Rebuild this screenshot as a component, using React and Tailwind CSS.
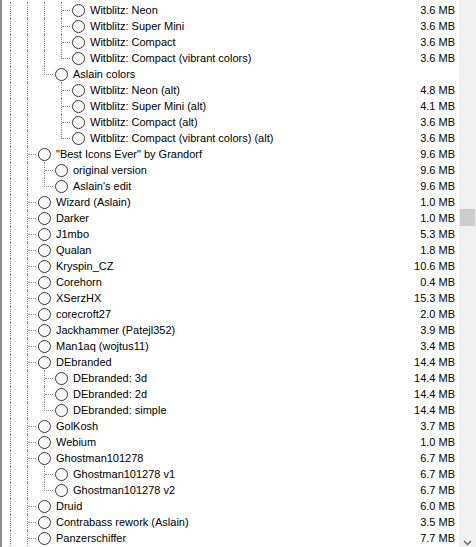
import React from 'react'

// tree cells: I = line passes through, T = tee, L = last child corner, ' ' = empty
const rows = [
  { cells: 'IIIT', name: 'Witblitz: Neon', size: '3.6 MB' },
  { cells: 'IIIT', name: 'Witblitz: Super Mini', size: '3.6 MB' },
  { cells: 'IIIT', name: 'Witblitz: Compact', size: '3.6 MB' },
  { cells: 'IIIL', name: 'Witblitz: Compact (vibrant colors)', size: '3.6 MB' },
  { cells: 'IIL', name: 'Aslain colors', size: '' },
  { cells: 'II T', name: 'Witblitz: Neon (alt)', size: '4.8 MB' },
  { cells: 'II T', name: 'Witblitz: Super Mini (alt)', size: '4.1 MB' },
  { cells: 'II T', name: 'Witblitz: Compact (alt)', size: '3.6 MB' },
  { cells: 'II L', name: 'Witblitz: Compact (vibrant colors) (alt)', size: '3.6 MB' },
  { cells: 'IT', name: '"Best Icons Ever" by Grandorf', size: '9.6 MB' },
  { cells: 'IIT', name: 'original version', size: '9.6 MB' },
  { cells: 'IIL', name: "Aslain's edit", size: '9.6 MB' },
  { cells: 'IT', name: 'Wizard (Aslain)', size: '1.0 MB' },
  { cells: 'IT', name: 'Darker', size: '1.0 MB' },
  { cells: 'IT', name: 'J1mbo', size: '5.3 MB' },
  { cells: 'IT', name: 'Qualan', size: '1.8 MB' },
  { cells: 'IT', name: 'Kryspin_CZ', size: '10.6 MB' },
  { cells: 'IT', name: 'Corehorn', size: '0.4 MB' },
  { cells: 'IT', name: 'XSerzHX', size: '15.3 MB' },
  { cells: 'IT', name: 'corecroft27', size: '2.0 MB' },
  { cells: 'IT', name: 'Jackhammer (Patejl352)', size: '3.9 MB' },
  { cells: 'IT', name: 'Man1aq (wojtus11)', size: '3.4 MB' },
  { cells: 'IT', name: 'DEbranded', size: '14.4 MB' },
  { cells: 'IIT', name: 'DEbranded: 3d', size: '14.4 MB' },
  { cells: 'IIT', name: 'DEbranded: 2d', size: '14.4 MB' },
  { cells: 'IIL', name: 'DEbranded: simple', size: '14.4 MB' },
  { cells: 'IT', name: 'GolKosh', size: '3.7 MB' },
  { cells: 'IT', name: 'Webium', size: '1.0 MB' },
  { cells: 'IT', name: 'Ghostman101278', size: '6.7 MB' },
  { cells: 'IIT', name: 'Ghostman101278 v1', size: '6.7 MB' },
  { cells: 'IIL', name: 'Ghostman101278 v2', size: '6.7 MB' },
  { cells: 'IT', name: 'Druid', size: '6.0 MB' },
  { cells: 'IT', name: 'Contrabass rework (Aslain)', size: '3.5 MB' },
  { cells: 'IT', name: 'Panzerschiffer', size: '7.7 MB' },
]

function TreeCell({ kind }) {
  if (kind === 'I') {
    return (
      <div className="w-[17px] h-full flex-shrink-0">
        <div className="ml-[8px] h-full border-l border-dotted border-[#8a8a8a]" />
      </div>
    )
  }
  if (kind === 'T') {
    return (
      <div className="w-[17px] h-full flex-shrink-0">
        <div className="ml-[8px] w-[9px] h-full border-l border-dotted border-[#8a8a8a]">
          <div className="h-[9px] border-b border-dotted border-[#8a8a8a]" />
        </div>
      </div>
    )
  }
  if (kind === 'L') {
    return (
      <div className="w-[17px] h-full flex-shrink-0">
        <div className="ml-[8px] w-[9px] h-[9px] border-l border-b border-dotted border-[#8a8a8a]" />
      </div>
    )
  }
  return <div className="w-[17px] h-full flex-shrink-0" />
}

function Row({ row }) {
  return (
    <div className="flex items-center h-[16px]">
      {row.cells.split('').map((c, i) => (
        <TreeCell key={i} kind={c} />
      ))}
      <div className="ml-[2px] w-[13px] h-[13px] rounded-full border border-[#333333] bg-white flex-shrink-0" />
      <span className="ml-[5px] whitespace-nowrap">{row.name}</span>
      <span className="ml-auto pr-[4px] whitespace-nowrap">{row.size}</span>
    </div>
  )
}

export default function App() {
  return (
    <div
      className="w-[476px] h-[547px] overflow-hidden bg-white flex text-[11px] text-black leading-none"
      style={{ fontFamily: '"Liberation Sans", Arial, sans-serif' }}
    >
      <div className="flex-1 border-l-2 border-[#8c8c8c] pt-[2px]">
        {rows.map((row, idx) => (
          <Row key={idx} row={row} />
        ))}
      </div>
      <div className="w-[17px] h-full bg-[#f0f0f0] flex flex-col">
        <div className="mt-[209px] mx-[1px] h-[17px] bg-[#cdcdcd]" />
        <div className="flex-1" />
        <div className="h-[7px] flex justify-center">
          <svg width="9" height="6" viewBox="0 0 9 6" className="mt-[0px]">
            <path d="M1 1 L4.5 4.5 L8 1" fill="none" stroke="#606060" strokeWidth="1.3" />
          </svg>
        </div>
      </div>
    </div>
  )
}
